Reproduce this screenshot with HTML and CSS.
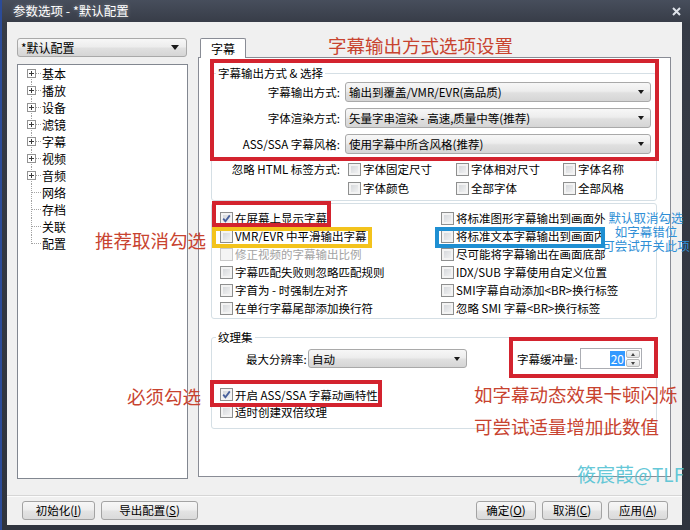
FILE: index.html
```html
<!DOCTYPE html>
<html lang="zh-CN">
<head>
<meta charset="utf-8">
<title>参数选项 - *默认配置</title>
<link rel="stylesheet" href="styles.css">
</head>
<body>
<div class="screen">
  <div class="window">
    <div class="titlebar">
      <span class="title">参数选项 - *默认配置</span>
      <svg class="close" width="9" height="9" viewBox="0 0 9 9"><path d="M1 1L8 8M8 1L1 8" stroke="#dfe3ea" stroke-width="2"/></svg>
    </div>
    <div class="client">
      <div class="main">
        <div class="left">
          <div class="combo preset"><span class="ctext">*默认配置</span><i class="arrow big"></i></div>
          <div class="tree">
            <div class="node first"><span class="conn"><svg class="pm" width="9" height="9" viewBox="0 0 9 9"><rect x="0.5" y="0.5" width="8" height="8" fill="#fff" stroke="#939393"/><path d="M2 4.5h5M4.5 2v5" stroke="#3a3a3a"/></svg></span><span class="nlabel">基本</span></div>
            <div class="node"><span class="conn"><svg class="pm" width="9" height="9" viewBox="0 0 9 9"><rect x="0.5" y="0.5" width="8" height="8" fill="#fff" stroke="#939393"/><path d="M2 4.5h5M4.5 2v5" stroke="#3a3a3a"/></svg></span><span class="nlabel">播放</span></div>
            <div class="node"><span class="conn"><svg class="pm" width="9" height="9" viewBox="0 0 9 9"><rect x="0.5" y="0.5" width="8" height="8" fill="#fff" stroke="#939393"/><path d="M2 4.5h5M4.5 2v5" stroke="#3a3a3a"/></svg></span><span class="nlabel">设备</span></div>
            <div class="node"><span class="conn"><svg class="pm" width="9" height="9" viewBox="0 0 9 9"><rect x="0.5" y="0.5" width="8" height="8" fill="#fff" stroke="#939393"/><path d="M2 4.5h5M4.5 2v5" stroke="#3a3a3a"/></svg></span><span class="nlabel">滤镜</span></div>
            <div class="node"><span class="conn"><svg class="pm" width="9" height="9" viewBox="0 0 9 9"><rect x="0.5" y="0.5" width="8" height="8" fill="#fff" stroke="#939393"/><path d="M2 4.5h5M4.5 2v5" stroke="#3a3a3a"/></svg></span><span class="nlabel">字幕</span></div>
            <div class="node"><span class="conn"><svg class="pm" width="9" height="9" viewBox="0 0 9 9"><rect x="0.5" y="0.5" width="8" height="8" fill="#fff" stroke="#939393"/><path d="M2 4.5h5M4.5 2v5" stroke="#3a3a3a"/></svg></span><span class="nlabel">视频</span></div>
            <div class="node"><span class="conn"><svg class="pm" width="9" height="9" viewBox="0 0 9 9"><rect x="0.5" y="0.5" width="8" height="8" fill="#fff" stroke="#939393"/><path d="M2 4.5h5M4.5 2v5" stroke="#3a3a3a"/></svg></span><span class="nlabel">音频</span></div>
            <div class="node"><span class="conn leaf"></span><span class="nlabel">网络</span></div>
            <div class="node"><span class="conn leaf"></span><span class="nlabel">存档</span></div>
            <div class="node"><span class="conn leaf"></span><span class="nlabel">关联</span></div>
            <div class="node"><span class="conn leaf last"></span><span class="nlabel">配置</span></div>
          </div>
        </div>
        <div class="right">
          <div class="tabs"><div class="tab">字幕</div></div>
          <div class="page">
            <div class="group g1">
              <div class="legend">字幕输出方式 &amp; 选择</div>
              <div class="form">
                <span class="flabel">字幕输出方式:</span>
                <div class="combo"><span class="ctext">输出到覆盖/VMR/EVR(高品质)</span><i class="arrow"></i></div>
                <span class="flabel">字体渲染方式:</span>
                <div class="combo"><span class="ctext">矢量字串渲染 - 高速,质量中等(推荐)</span><i class="arrow"></i></div>
                <span class="flabel">ASS/SSA 字幕风格:</span>
                <div class="combo"><span class="ctext">使用字幕中所含风格(推荐)</span><i class="arrow"></i></div>
              </div>
              <div class="html-ignore">
                <span class="flabel">忽略 HTML 标签方式:</span>
                <label class="chk"><span class="cb"></span>字体固定尺寸</label>
                <label class="chk"><span class="cb"></span>字体相对尺寸</label>
                <label class="chk"><span class="cb"></span>字体名称</label>
                <span></span>
                <label class="chk"><span class="cb"></span>字体颜色</label>
                <label class="chk"><span class="cb"></span>全部字体</label>
                <label class="chk"><span class="cb"></span>全部风格</label>
              </div>
            </div>
            <div class="group g2">
              <label class="chk"><span class="cb checked"><svg width="11" height="11" viewBox="0 0 11 11"><path d="M2.2 5.6L4.4 8.2L8.8 2.4" stroke="#48609c" stroke-width="1.8" fill="none"/></svg></span>在屏幕上显示字幕</label>
              <label class="chk"><span class="cb"></span>将标准图形字幕输出到画面外</label>
              <label class="chk"><span class="cb"></span>VMR/EVR 中平滑输出字幕</label>
              <label class="chk"><span class="cb"></span>将标准文本字幕输出到画面内</label>
              <label class="chk disabled"><span class="cb"></span>修正视频的字幕输出比例</label>
              <label class="chk"><span class="cb"></span>尽可能将字幕输出在画面底部</label>
              <label class="chk"><span class="cb"></span>字幕匹配失败则忽略匹配规则</label>
              <label class="chk"><span class="cb"></span>IDX/SUB 字幕使用自定义位置</label>
              <label class="chk"><span class="cb"></span>字首为 - 时强制左对齐</label>
              <label class="chk"><span class="cb"></span>SMI字幕自动添加&lt;BR&gt;换行标签</label>
              <label class="chk"><span class="cb"></span>在单行字幕尾部添加换行符</label>
              <label class="chk"><span class="cb"></span>忽略 SMI 字幕&lt;BR&gt;换行标签</label>
            </div>
            <div class="group g3">
              <div class="legend">纹理集</div>
              <div class="texrow">
                <span class="reslabel">最大分辨率:</span>
                <div class="combo res"><span class="ctext">自动</span><i class="arrow"></i></div>
                <span class="buflabel">字幕缓冲量:</span>
                <div class="spin">
                  <span class="val"><span class="sel">20</span></span>
                  <span class="spinbtns"><span class="sbtn"><i class="up"></i></span><span class="sbtn"><i class="down"></i></span></span>
                </div>
              </div>
              <div class="texchecks">
                <label class="chk"><span class="cb checked"><svg width="11" height="11" viewBox="0 0 11 11"><path d="M2.2 5.6L4.4 8.2L8.8 2.4" stroke="#48609c" stroke-width="1.8" fill="none"/></svg></span>开启 ASS/SSA 字幕动画特性</label>
                <label class="chk"><span class="cb"></span>适时创建双倍纹理</label>
              </div>
            </div>
          </div>
        </div>
      </div>
      <div class="sep"></div>
      <div class="buttons">
        <button class="btn w73">初始化(<u>I</u>)</button>
        <button class="btn w97">导出配置(<u>S</u>)</button>
        <div class="btn-right">
          <button class="btn w60">确定(<u>O</u>)</button>
          <button class="btn w60">取消(<u>C</u>)</button>
          <button class="btn w60">应用(<u>A</u>)</button>
        </div>
      </div>
    </div>
  </div>

  <div class="note red n-title">字幕输出方式选项设置</div>
  <div class="note red n-rec">推荐取消勾选</div>
  <div class="note red n-must">必须勾选</div>
  <div class="note red n-buf1">如字幕动态效果卡顿闪烁</div>
  <div class="note red n-buf2">可尝试适量增加此数值</div>
  <div class="note blue n-blue">默认取消勾选<br>如字幕错位<br>可尝试开关此项</div>
  <div class="note n-wm">筱宸葭@TLF</div>

  <div class="mark red-box box1"></div>
  <div class="mark red-box box2"></div>
  <div class="mark yellow-box"></div>
  <div class="mark blue-box"></div>
  <div class="mark red-box box3"></div>
  <div class="mark red-box box4"></div>
</div>
</body>
</html>
```

FILE: styles.css
```css
* { box-sizing: border-box; }

body {
  margin: 0;
  background: #2b4b98;
  font-family: "Noto Sans CJK SC", "Microsoft YaHei", sans-serif;
  font-size: 12px;
  color: #000;
}

.screen {
  position: relative;
  width: 690px;
  height: 530px;
  overflow: hidden;
}

.window {
  margin-left: 2px;
  width: 688px;
  height: 530px;
  background: linear-gradient(#474e5c, #363b46 24px, #2f343e);
  display: flex;
  flex-direction: column;
}

.titlebar {
  height: 22px;
  display: flex;
  align-items: center;
  justify-content: space-between;
  padding: 0 9px 0 11px;
}

.title {
  color: #fff;
  font-size: 12.5px;
  line-height: 22px;
  text-shadow: 0 0 4px rgba(255, 255, 255, 0.35);
}

.close { display: block; }

.client {
  margin: 0 8px 5px 5px;
  flex: 1;
  background: #f0f0f0;
  display: flex;
  flex-direction: column;
  font-size: 11.5px;
}

.main {
  height: 457px;
  display: flex;
  gap: 10px;
  padding: 16px 11px 0 10px;
}

/* ---------- left ---------- */
.left {
  width: 171px;
  display: flex;
  flex-direction: column;
}

.combo {
  display: flex;
  align-items: center;
  height: 20px;
  border: 1px solid #a9a9a9;
  border-radius: 3px;
  background: linear-gradient(#f7f7f7, #ededed 45%, #e0e0e0 55%, #d5d5d5);
  padding-left: 3px;
  white-space: nowrap;
}

.ctext { line-height: 18px; }

.arrow {
  margin-left: auto;
  margin-right: 6px;
  width: 0;
  height: 0;
  border-left: 3px solid transparent;
  border-right: 3px solid transparent;
  border-top: 4px solid #1a1a1a;
}

.arrow.big {
  margin-right: 7px;
  border-left-width: 4px;
  border-right-width: 4px;
  border-top-width: 5px;
}

.preset {
  width: 170px;
  height: 19px;
  margin-bottom: 7px;
  font-size: 12px;
}

.tree {
  height: 415px;
  border: 1px solid #828790;
  background: #fff;
  font-size: 12px;
}

.node {
  display: flex;
  align-items: center;
  height: 17px;
  padding-left: 9px;
}

.conn {
  width: 15px;
  height: 17px;
  display: flex;
  align-items: center;
  background:
    repeating-linear-gradient(to bottom, #a3a3a3 0 1px, transparent 1px 2px) 4px 0 / 1px 100% no-repeat,
    repeating-linear-gradient(to right, #a3a3a3 0 1px, transparent 1px 2px) 5px 8px / 9px 1px no-repeat;
}

.node.first .conn {
  background:
    repeating-linear-gradient(to bottom, #a3a3a3 0 1px, transparent 1px 2px) 4px 8px / 1px 9px no-repeat,
    repeating-linear-gradient(to right, #a3a3a3 0 1px, transparent 1px 2px) 5px 8px / 9px 1px no-repeat;
}

.conn.last {
  background:
    repeating-linear-gradient(to bottom, #a3a3a3 0 1px, transparent 1px 2px) 4px 0 / 1px 9px no-repeat,
    repeating-linear-gradient(to right, #a3a3a3 0 1px, transparent 1px 2px) 5px 8px / 9px 1px no-repeat;
}

.pm { display: block; }

.nlabel { line-height: 17px; }

/* ---------- right ---------- */
.right {
  width: 473px;
  display: flex;
  flex-direction: column;
}

.tabs {
  height: 19px;
  display: flex;
  padding-left: 2px;
}

.tab {
  position: relative;
  z-index: 1;
  width: 46px;
  height: 20px;
  border: 1px solid #898c95;
  border-bottom: none;
  border-radius: 2px 2px 0 0;
  background: #fff;
  text-align: center;
  line-height: 19px;
  font-size: 12px;
}

.page {
  height: 420px;
  border: 1px solid #898c95;
  background: #fff;
  padding-top: 15px;
}

.group {
  margin: 0 13px 0 12px;
  width: 446px;
  border: 1px solid #d5dfe5;
  border-radius: 3px;
}

.legend {
  width: max-content;
  margin: -9px 0 0 4px;
  padding: 0 2px;
  background: #fff;
  line-height: 16px;
}

.form {
  display: grid;
  grid-template-columns: 128px 306px;
  column-gap: 5px;
  row-gap: 6px;
  margin-top: 1px;
}

.form .combo { height: 20px; }

.flabel {
  text-align: right;
  line-height: 20px;
  white-space: nowrap;
}

.html-ignore {
  display: grid;
  grid-template-columns: 136px 108px 107px 1fr;
  row-gap: 1px;
  margin-top: 6px;
  padding-bottom: 3px;
}

.html-ignore .flabel {
  padding-right: 8px;
  line-height: 18px;
}

.chk {
  display: flex;
  align-items: center;
  gap: 2px;
  height: 18px;
  white-space: nowrap;
  justify-self: start;
  width: max-content;
}

.cb {
  flex: none;
  width: 13px;
  height: 13px;
  border: 1px solid #8e8f8f;
  background: linear-gradient(135deg, #cfd2d6, #f7f7f7);
  box-shadow: inset 0 0 0 2px #f3f3f3;
  display: flex;
  align-items: center;
  justify-content: center;
}

.cb svg { display: block; }

.chk.disabled { color: #a3a3a3; }
.chk.disabled .cb {
  border-color: #c9c9c9;
  background: #f4f4f4;
  box-shadow: none;
}

.g2 {
  margin-top: 2px;
  height: 116px;
  display: grid;
  grid-template-columns: 221px 1fr;
  grid-auto-rows: 18px;
  padding: 5px 0 0 8px;
}

.g3 {
  margin-top: 18px;
  height: 92px;
}

.texrow {
  display: flex;
  align-items: center;
  height: 21px;
  margin-top: 3px;
}

.reslabel {
  margin-left: 34px;
  width: 62px;
  white-space: nowrap;
}

.combo.res {
  width: 159px;
  height: 19px;
}

.buflabel {
  margin-left: 50px;
  width: 63px;
  white-space: nowrap;
}

.spin {
  display: flex;
  width: 62px;
  height: 21px;
  border: 1px solid #abadb3;
  background: #fff;
}

.val {
  flex: 1;
  display: flex;
  justify-content: flex-end;
  align-items: center;
  padding-right: 1px;
}

.sel {
  background: #3399ff;
  color: #fff;
  line-height: 15px;
  padding: 0 1px;
  font-size: 12px;
}

.spinbtns {
  width: 15px;
  display: flex;
  flex-direction: column;
  gap: 1px;
  padding: 1px 1px 1px 0;
}

.sbtn {
  flex: 1;
  border: 1px solid #b9b9b9;
  border-radius: 2px;
  background: linear-gradient(#f6f6f6, #e2e2e2);
  display: flex;
  align-items: center;
  justify-content: center;
}

.sbtn i {
  width: 0;
  height: 0;
  border-left: 2.5px solid transparent;
  border-right: 2.5px solid transparent;
}

.sbtn .up { border-bottom: 3px solid #444; }
.sbtn .down { border-top: 3px solid #444; }

.texchecks {
  margin-top: 17px;
  padding-left: 8px;
  display: flex;
  flex-direction: column;
}

.texchecks .chk { height: 17px; }

/* ---------- footer ---------- */
.sep {
  margin-top: 16px;
  height: 2px;
  border-top: 1px solid #d6d6d6;
  border-bottom: 1px solid #fcfcfc;
}

.buttons {
  display: flex;
  gap: 6px;
  padding: 4px 14px 0 15px;
}

.btn-right {
  margin-left: auto;
  display: flex;
  gap: 6px;
}

.btn {
  height: 19px;
  border: 1px solid #a3a3a3;
  border-radius: 3px;
  background: linear-gradient(#f7f7f7, #eeeeee 45%, #e3e3e3 55%, #dadada);
  font-family: inherit;
  font-size: 11.5px;
  color: #000;
  padding: 0;
  line-height: 17px;
}

.btn u { text-underline-offset: 1px; }

.w73 { width: 73px; }
.w97 { width: 97px; }
.w60 { width: 60px; }

/* ---------- annotations ---------- */
.mark {
  position: absolute;
  border: 4px solid #d3232e;
}

.box1 { left: 210px; top: 59px; width: 449px; height: 102px; }
.box2 { left: 212px; top: 201px; width: 119px; height: 26px; }
.yellow-box { left: 212px; top: 227px; width: 160px; height: 21px; border-color: #f3c31c; }
.blue-box { left: 435px; top: 227px; width: 170px; height: 21px; border-color: #1f8fd2; }
.box3 { left: 509px; top: 337px; width: 149px; height: 41px; }
.box4 { left: 210px; top: 380px; width: 172px; height: 27px; }

.note {
  position: absolute;
  white-space: nowrap;
}

.note.red {
  color: #c8432f;
  font-size: 18.5px;
  line-height: 22px;
}

.n-title { left: 328px; top: 34px; }
.n-rec { left: 95px; top: 229px; }
.n-must { left: 127px; top: 385px; }
.n-buf1 { left: 474px; top: 383px; }
.n-buf2 { left: 474px; top: 415px; }

.note.blue {
  left: 597px;
  top: 211px;
  width: 98px;
  text-align: center;
  color: #2f8fd6;
  font-size: 12.5px;
  line-height: 14px;
}

.n-wm {
  left: 577px;
  top: 462px;
  color: #55c3d4;
  font-size: 19px;
  line-height: 24px;
  opacity: 0.9;
}
```
